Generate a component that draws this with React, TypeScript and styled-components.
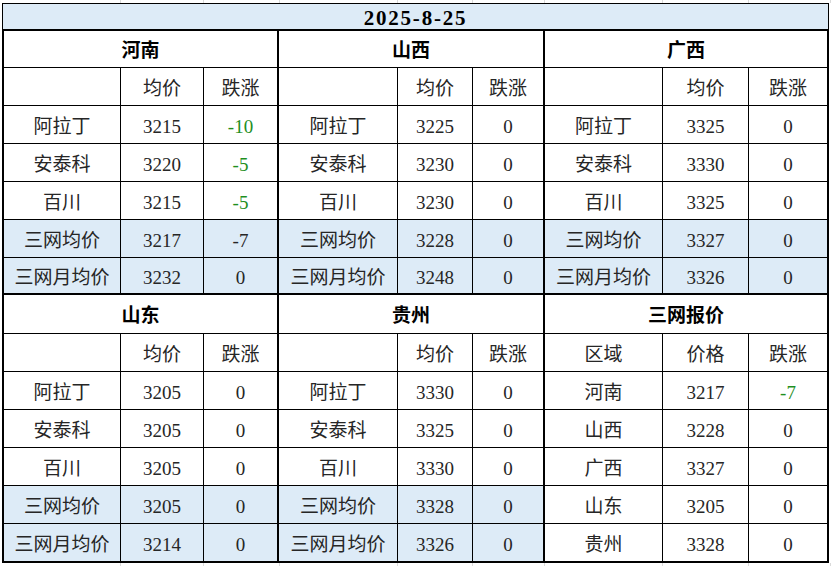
import React from 'react';
import styled, { createGlobalStyle } from 'styled-components';

const Global = createGlobalStyle`
  html, body { margin: 0; padding: 0; background: #ffffff; }
  body { font-family: "Liberation Serif", "Noto Sans CJK SC", serif; }
`;

const Page = styled.div`
  width: 831px;
  height: 566px;
  overflow: hidden;
  display: flex;
  flex-direction: column;
  background: #ffffff;
`;

const Strip = styled.div`
  display: flex;
  height: 3px;
  flex: none;
`;

const StripCell = styled.div<{ $w: number }>`
  flex: none;
  width: ${(p) => p.$w}px;
  box-sizing: border-box;
  border-right: 1px solid #dadada;
`;

const Sheet = styled.div`
  margin-left: 2px;
  width: 827px;
  display: flex;
  flex-direction: column;
  flex: none;
`;

const Title = styled.div`
  height: 26px;
  box-sizing: border-box;
  border: 1px solid #000;
  border-bottom: none;
  background: #ddebf7;
  display: flex;
  align-items: flex-end;
  justify-content: center;
  font-family: "Liberation Serif", serif;
  font-weight: bold;
  font-size: 21px;
  line-height: 21px;
  letter-spacing: 1.8px;
  color: #000;
`;

const Body = styled.div`
  display: grid;
  grid-template-columns: 273px 264px 282px;
  grid-template-rows: 262px 266px;
  gap: 2px;
  padding: 2px;
  background: #000;
`;

const Block = styled.div<{ $cols: string; $rows: string }>`
  display: grid;
  grid-template-columns: ${(p) => p.$cols};
  grid-template-rows: ${(p) => p.$rows};
  gap: 1px;
  background: #000;
`;

const Cell = styled.div<{ $blue?: boolean; $green?: boolean }>`
  background: ${(p) => (p.$blue ? '#ddebf7' : '#ffffff')};
  display: flex;
  align-items: center;
  justify-content: center;
  padding-top: 3px;
  box-sizing: border-box;
  font-size: 19px;
  line-height: 19px;
  color: ${(p) => (p.$green ? '#1f8f1f' : '#262626')};
  white-space: nowrap;
`;

const HeadCell = styled(Cell)`
  grid-column: 1 / -1;
  font-weight: bold;
  color: #000;
`;

type Row = { label: string; price: string; change: string; blue?: boolean; green?: boolean };
type BlockData = { name: string; cols: string; heads: [string, string, string]; rows: Row[] };

const topRows = '36px 37px 37px 37px 37px 37px 35px';
const bottomRows = '38px 37px 37px 37px 37px 37px 37px';

const colsA = '116px 82px 73px';
const colsB = '118px 74px 70px';
const colsC = '117px 85px 78px';

const regional = (
  vals: [string, string][],
  greens: boolean[] = [false, false, false, false, false]
): Row[] =>
  ['阿拉丁', '安泰科', '百川', '三网均价', '三网月均价'].map((label, i) => ({
    label,
    price: vals[i][0],
    change: vals[i][1],
    blue: i >= 3,
    green: greens[i],
  }));

const blocks: BlockData[] = [
  {
    name: '河南',
    cols: colsA,
    heads: ['', '均价', '跌涨'],
    rows: regional(
      [
        ['3215', '-10'],
        ['3220', '-5'],
        ['3215', '-5'],
        ['3217', '-7'],
        ['3232', '0'],
      ],
      [true, true, true, false, false]
    ),
  },
  {
    name: '山西',
    cols: colsB,
    heads: ['', '均价', '跌涨'],
    rows: regional([
      ['3225', '0'],
      ['3230', '0'],
      ['3230', '0'],
      ['3228', '0'],
      ['3248', '0'],
    ]),
  },
  {
    name: '广西',
    cols: colsC,
    heads: ['', '均价', '跌涨'],
    rows: regional([
      ['3325', '0'],
      ['3330', '0'],
      ['3325', '0'],
      ['3327', '0'],
      ['3326', '0'],
    ]),
  },
  {
    name: '山东',
    cols: colsA,
    heads: ['', '均价', '跌涨'],
    rows: regional([
      ['3205', '0'],
      ['3205', '0'],
      ['3205', '0'],
      ['3205', '0'],
      ['3214', '0'],
    ]),
  },
  {
    name: '贵州',
    cols: colsB,
    heads: ['', '均价', '跌涨'],
    rows: regional([
      ['3330', '0'],
      ['3325', '0'],
      ['3330', '0'],
      ['3328', '0'],
      ['3326', '0'],
    ]),
  },
  {
    name: '三网报价',
    cols: colsC,
    heads: ['区域', '价格', '跌涨'],
    rows: [
      { label: '河南', price: '3217', change: '-7', green: true },
      { label: '山西', price: '3228', change: '0' },
      { label: '广西', price: '3327', change: '0' },
      { label: '山东', price: '3205', change: '0' },
      { label: '贵州', price: '3328', change: '0' },
    ],
  },
];

const gridBounds = [120, 203, 279, 397, 472, 544, 662, 748, 830];
const stripWidths = gridBounds.map((b, i) => b - (i === 0 ? -1 : gridBounds[i - 1]));

const GridStrip: React.FC = () => (
  <Strip>
    {stripWidths.map((w, i) => (
      <StripCell key={i} $w={w} />
    ))}
  </Strip>
);

const PriceBlock: React.FC<{ data: BlockData; rows: string }> = ({ data, rows }) => (
  <Block $cols={data.cols} $rows={rows}>
    <HeadCell>{data.name}</HeadCell>
    {data.heads.map((h, i) => (
      <Cell key={`h${i}`}>{h}</Cell>
    ))}
    {data.rows.map((r, i) => (
      <React.Fragment key={i}>
        <Cell $blue={r.blue}>{r.label}</Cell>
        <Cell $blue={r.blue}>{r.price}</Cell>
        <Cell $blue={r.blue} $green={r.green}>
          {r.change}
        </Cell>
      </React.Fragment>
    ))}
  </Block>
);

export default function App() {
  return (
    <>
      <Global />
      <Page>
        <GridStrip />
        <Sheet>
          <Title>2025-8-25</Title>
          <Body>
            {blocks.map((b, i) => (
              <PriceBlock key={b.name} data={b} rows={i < 3 ? topRows : bottomRows} />
            ))}
          </Body>
        </Sheet>
        <GridStrip />
      </Page>
    </>
  );
}
